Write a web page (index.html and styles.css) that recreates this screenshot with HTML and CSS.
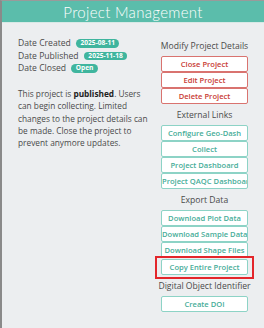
FILE: index.html
```html
<!DOCTYPE html>
<html>
<head>
<meta charset="utf-8">
<link rel="stylesheet" href="styles.css">
</head>
<body>
<div class="panel">
  <div class="header">Project Management</div>
  <div class="main">
    <div class="left">
      <div class="dates">
        <div class="date-row">Date Created <span class="badge">2025-08-11</span></div>
        <div class="date-row">Date Published <span class="badge">2025-11-18</span></div>
        <div class="date-row">Date Closed <span class="badge">Open</span></div>
      </div>
      <p class="desc">This project is <b>published</b>. Users can begin collecting. Limited changes to the project details can be made. Close the project to prevent anymore updates.</p>
    </div>
    <div class="right">
      <div class="heading">Modify Project Details</div>
      <div class="btn red">Close Project</div>
      <div class="btn red">Edit Project</div>
      <div class="btn red">Delete Project</div>
      <div class="heading">External Links</div>
      <div class="btn teal">Configure Geo-Dash</div>
      <div class="btn teal">Collect</div>
      <div class="btn teal">Project Dashboard</div>
      <div class="btn teal">Project QAQC Dashboard</div>
      <div class="heading">Export Data</div>
      <div class="btn teal">Download Plot Data</div>
      <div class="btn teal">Download Sample Data</div>
      <div class="btn teal">Download Shape Files</div>
      <div class="btn teal highlight">Copy Entire Project</div>
      <div class="heading wide">Digital Object Identifier</div>
      <div class="btn teal">Create DOI</div>
    </div>
  </div>
</div>
</body>
</html>
```
FILE: styles.css
```css
html, body {
  margin: 0;
  padding: 0;
  background: #eceef0;
}
.panel {
  width: 264px;
  height: 328px;
  box-sizing: border-box;
  border-left: 2px solid #8a8a8a;
  border-top: 1px solid #9a9a9a;
  background: #eceef0;
  font-family: "Open Sans", "Noto Sans", sans-serif;
  color: #4a4a4a;
  overflow: hidden;
}
.header {
  height: 21px;
  background: #5bbdab;
  color: #fff;
  font-family: Lato, "DejaVu Sans", sans-serif;
  font-weight: 300;
  font-size: 15px;
  line-height: 22px;
  text-align: center;
  border-bottom: 1px solid #d8e9e6;
  letter-spacing: 0.3px;
}
.main {
  display: flex;
}
.left {
  width: 136px;
  flex-shrink: 0;
  padding-left: 16px;
  padding-top: 14px;
}
.dates {
  font-size: 8.6px;
}
.date-row {
  height: 12.6px;
  line-height: 12.6px;
  white-space: nowrap;
}
.badge {
  display: inline-block;
  background: #3fb59e;
  color: #fff;
  font-weight: 700;
  font-size: 6.6px;
  line-height: 8.5px;
  padding: 0 4.5px;
  border-radius: 5px;
  vertical-align: 1px;
  margin-left: 3px;
}
.desc {
  margin: 13px 0 0 0;
  font-size: 8.3px;
  line-height: 12.4px;
  width: 134px;
}
.desc b {
  color: #222;
}
.right {
  width: 87px;
  min-width: 0;
  flex-shrink: 0;
  margin-left: auto;
  margin-right: 16px;
  padding-top: 17px;
  display: flex;
  flex-direction: column;
  align-items: stretch;
}
.heading {
  font-size: 8.6px;
  line-height: 12px;
  text-align: center;
  margin: 5px -6px 4px;
  white-space: nowrap;
  color: #4a4a4a;
}
.heading:first-child {
  margin-top: 0;
}
.btn {
  height: 16px;
  box-sizing: border-box;
  background: #fff;
  font-size: 7.6px;
  font-weight: 600;
  line-height: 14px;
  text-align: center;
  white-space: nowrap;
  overflow: hidden;
  border-radius: 2px;
  position: relative;
}
.btn.red {
  border: 1px solid #d9736f;
  color: #c93b35;
}
.btn.teal {
  border: 1px solid #8dd3c6;
  color: #47ad99;
}
.btn.highlight {
  overflow: visible;
  margin-top: 1px;
}
.btn.highlight::after {
  content: "";
  position: absolute;
  top: -4px;
  bottom: -5px;
  left: -7px;
  right: -7px;
  border: 2px solid #e3262b;
}
```
